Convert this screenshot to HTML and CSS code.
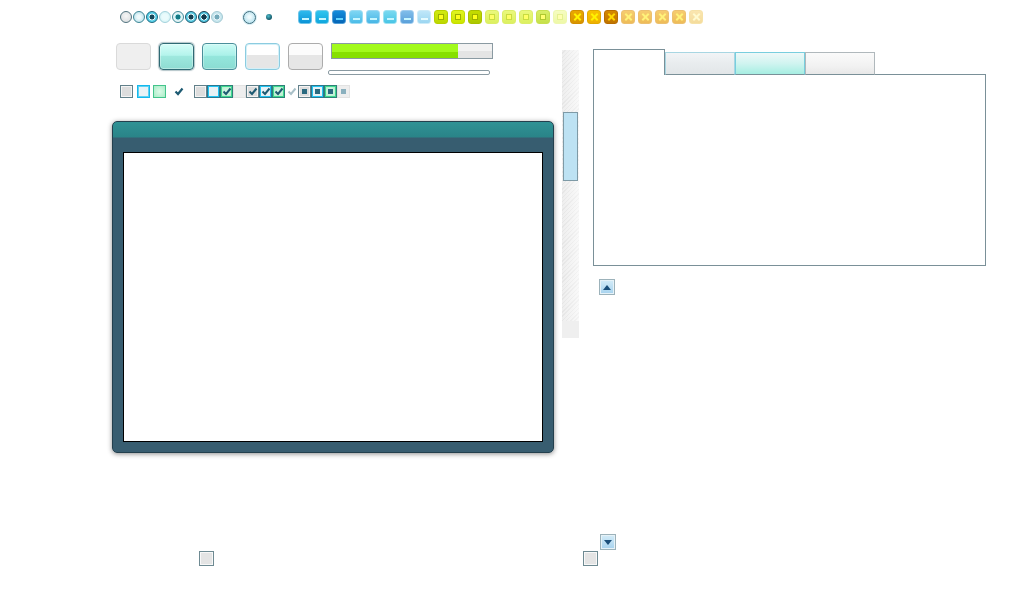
FILE: index.html
```html
<!DOCTYPE html>
<html lang="en">
<head>
<meta charset="utf-8">
<title>Widgets</title>
<link rel="stylesheet" href="styles.css">
</head>
<body>
<div class="page">
  <div class="toprow">
    <div class="radios">
      <span class="r r1"></span><span class="r r2"></span><span class="r r3"></span><span class="r r4"></span>
      <span class="r r5"></span><span class="r r6"></span><span class="r r7"></span><span class="r r8"></span>
    </div>
    <span class="bigradio"></span>
    <span class="dot"></span>
    <div class="icons">
      <span class="ic b b1"></span><span class="ic b b2"></span><span class="ic b b3"></span><span class="ic b b4"></span>
      <span class="ic b b5"></span><span class="ic b b6"></span><span class="ic b b7"></span><span class="ic b b8"></span>
      <span class="ic y y1"></span><span class="ic y y2"></span><span class="ic y y3"></span><span class="ic y y4"></span>
      <span class="ic y y5"></span><span class="ic y y6"></span><span class="ic y y7"></span><span class="ic y y8"></span>
      <span class="ic o o1"></span><span class="ic o o2"></span><span class="ic o o3"></span><span class="ic o o4"></span>
      <span class="ic o o5"></span><span class="ic o o6"></span><span class="ic o o7"></span><span class="ic o o8"></span>
    </div>
  </div>

  <div class="main">
    <div class="left">
      <div class="controls">
        <div class="btns">
          <span class="btn bt1"></span>
          <span class="btn bt2"></span>
          <span class="btn bt3"></span>
          <span class="btn bt4"></span>
          <span class="btn bt5"></span>
        </div>
        <div class="bars">
          <div class="progress"><div class="fill" style="width:79%"></div></div>
          <div class="thin"></div>
        </div>
      </div>

      <div class="checks">
        <span class="cb grey"></span>
        <span class="cb cyan gap4"></span>
        <span class="cb green gap3"></span>
        <span class="tick gap8"><svg width="10" height="9" viewBox="0 0 10 9"><path d="M1.5 4.5 L4 7 L8.5 1.5" fill="none" stroke="#1d5a72" stroke-width="2.2"/></svg></span>
        <div class="group">
          <span class="cb grey"></span>
          <span class="cb cyan"></span>
          <span class="cb green"><svg width="10" height="9" viewBox="0 0 10 9"><path d="M1.5 4.5 L4 7 L8.5 1.5" fill="none" stroke="#1d5a72" stroke-width="2"/></svg></span>
          <span class="cb faint"></span>
          <span class="cb grey"><svg width="10" height="9" viewBox="0 0 10 9"><path d="M1.5 4.5 L4 7 L8.5 1.5" fill="none" stroke="#1d5a72" stroke-width="2"/></svg></span>
          <span class="cb cyan"><svg width="10" height="9" viewBox="0 0 10 9"><path d="M1.5 4.5 L4 7 L8.5 1.5" fill="none" stroke="#1d5a72" stroke-width="2"/></svg></span>
          <span class="cb green"><svg width="10" height="9" viewBox="0 0 10 9"><path d="M1.5 4.5 L4 7 L8.5 1.5" fill="none" stroke="#1d5a72" stroke-width="2"/></svg></span>
          <span class="cb none"><svg width="10" height="9" viewBox="0 0 10 9"><path d="M1.5 4.5 L4 7 L8.5 1.5" fill="none" stroke="#a9c0c8" stroke-width="2"/></svg></span>
          <span class="cb grey"><span class="mark"></span></span>
          <span class="cb cyan"><span class="mark"></span></span>
          <span class="cb green"><span class="mark"></span></span>
          <span class="cb faint"><span class="mark pale"></span></span>
        </div>
      </div>

      <div class="window">
        <div class="win-inner"></div>
      </div>
    </div>

    <div class="scroll">
      <div class="track"><div class="thumb"></div></div>
      <div class="cap"></div>
    </div>

    <div class="right">
      <div class="tabs">
        <div class="tab active"></div>
        <div class="tab t1"></div>
        <div class="tab t2"></div>
        <div class="tab t3"></div>
        <div class="tabfill"></div>
      </div>
      <div class="panel"></div>
      <span class="arrow up"><svg width="10" height="7" viewBox="0 0 10 7"><path d="M1 6 L5 1 L9 6 Z" fill="#1b4f7a"/></svg></span>
      <span class="arrow down"><svg width="10" height="7" viewBox="0 0 10 7"><path d="M1 1 L9 1 L5 6 Z" fill="#1b4f7a"/></svg></span>
    </div>
  </div>

  <div class="bottom">
    <span class="sq first"></span>
    <span class="sq second"></span>
  </div>
</div>
</body>
</html>
```

FILE: styles.css
```css
html, body {
  margin: 0;
  padding: 0;
  background: #ffffff;
  font-family: "Liberation Sans", Arial, sans-serif;
}

.page {
  width: 1024px;
  height: 600px;
  padding-top: 10px;
  box-sizing: border-box;
}

/* ---------- top row ---------- */
.toprow {
  display: flex;
  align-items: center;
  height: 14px;
  margin-left: 120px;
}

.radios {
  display: flex;
  gap: 1px;
}

.r {
  width: 12px;
  height: 12px;
  border-radius: 50%;
  box-sizing: border-box;
  border: 1px solid #50727e;
}
.r1 { background: radial-gradient(circle at 50% 40%, #f6f6f6, #d6dadc); }
.r2 { border-color: #3e8796; background: radial-gradient(circle, #eef9fb 25%, #a6d8e6 100%); }
.r3 { border-color: #1e6a80; background: radial-gradient(circle closest-side, #17485a 0 45%, #e8fbff 55% 62%, #55cfe8 75%); }
.r4 { border-color: #a4d2dc; background: radial-gradient(circle, #eafbfc 40%, #c4eef2); }
.r5 { border-color: #3e8a98; background: radial-gradient(circle closest-side, #137a86 0 45%, #c0eef2 55% 62%, #e6f4f6 75%); }
.r6 { border-color: #1b5a72; background: radial-gradient(circle closest-side, #153e50 0 45%, #e8fbff 55% 62%, #5ccde4 75%); }
.r7 { border-color: #133c50; background: radial-gradient(circle closest-side, #10384a 0 48%, #e8fbff 58% 64%, #4fc4de 76%); }
.r8 { border-color: #a2c8d2; background: radial-gradient(circle closest-side, #74a9ba 0 45%, #eaf6fa 55% 62%, #c6e6ee 75%); }

.bigradio {
  width: 13px;
  height: 13px;
  margin-left: 20px;
  border-radius: 50%;
  box-sizing: border-box;
  border: 1px solid #3c6b7c;
  background: radial-gradient(circle at 50% 45%, #eefafd 15%, #a6dbea 95%);
  box-shadow: 0 0 0 1px #d6f0f6;
}

.dot {
  width: 6px;
  height: 6px;
  margin-left: 10px;
  border-radius: 50%;
  background: radial-gradient(circle at 40% 35%, #4fbccc, #135868 70%);
}

.icons {
  display: flex;
  gap: 3px;
  margin-left: 26px;
}

.ic {
  width: 14px;
  height: 14px;
  border-radius: 3px;
  box-sizing: border-box;
  border: 1px solid transparent;
}

/* blue dash icons */
.b {
  display: flex;
  justify-content: center;
  align-items: flex-end;
  padding-bottom: 3px;
}
.b::after {
  content: "";
  width: 7px;
  height: 2px;
  background: #c6f6ff;
}
.b1 { border-color: #6ec4e8; background: linear-gradient(#2dbaed, #0b93d6); }
.b2 { border-color: #74cdea; background: linear-gradient(#30c4ee, #0fa6de); }
.b3 { border-color: #4f9ed8; background: linear-gradient(#138cdc, #0565b6); }
.b3::after { background: #62d4ff; }
.b4 { border-color: #9cdcf2; background: linear-gradient(#7ed6f3, #4cbce8); }
.b5 { border-color: #9cd8f2; background: linear-gradient(#7ad1f2, #47b6e5); }
.b6 { border-color: #9ee2f2; background: linear-gradient(#7ad9f0, #49c5e6); }
.b7 { border-color: #a2cdef; background: linear-gradient(#80bdea, #5aa0da); }
.b8 { border-color: #cdebf8; background: linear-gradient(#bfe7f9, #9cd6f1); }
.b8::after { background: #e6fbff; }

/* yellow square icons */
.y {
  display: flex;
  justify-content: center;
  align-items: center;
}
.y::after {
  content: "";
  width: 6px;
  height: 6px;
  box-sizing: border-box;
  border: 1px solid #9cb000;
  background: #ffff1a;
}
.y1 { border-color: #b8d000; background: linear-gradient(#d2ea10, #bcd800); }
.y2 { border-color: #c6dc00; background: linear-gradient(#e0f420, #cce600); }
.y3 { border-color: #a8c000; background: linear-gradient(#c4dc00, #acc800); }
.y4, .y5, .y6 { border-color: #dcee6a; background: linear-gradient(#eaf87c, #dcf060); }
.y4::after, .y5::after, .y6::after { border-color: #c8dc40; background: #ffff66; }
.y7 { border-color: #c8e050; background: linear-gradient(#d8ee66, #c6e04a); }
.y7::after { border-color: #b0c830; background: #ffff70; }
.y8 { border-color: #eef8b0; background: linear-gradient(#f6fcc0, #eef8a8); }
.y8::after { border-color: #e4f090; background: #ffffb0; }

/* orange X icons */
.o {
  display: grid;
  place-items: center;
}
.o::before, .o::after {
  content: "";
  grid-area: 1 / 1;
  width: 9px;
  height: 2px;
  background: #fff200;
  transform: rotate(45deg);
}
.o::after { transform: rotate(-45deg); }
.o1 { border-color: #d28e00; background: linear-gradient(#eaa800, #d89400); }
.o2 { border-color: #e2aa00; background: linear-gradient(#f8c200, #eeb000); }
.o3 { border-color: #b86c00; background: linear-gradient(#d48800, #c07400); }
.o3::before, .o3::after { background: #ffd800; }
.o4, .o5, .o6, .o7 { border-color: #ecc070; background: linear-gradient(#f6cc70, #eebc58); }
.o4::before, .o4::after, .o5::before, .o5::after,
.o6::before, .o6::after, .o7::before, .o7::after { background: #fff27a; }
.o8 { border-color: #f6e2a8; background: linear-gradient(#fae6b0, #f4dc9c); }
.o8::before, .o8::after { background: #fffad0; }

/* ---------- main ---------- */
.main {
  display: flex;
  align-items: flex-start;
  margin-top: 19px;
}

.left {
  width: 442px;
  margin-left: 112px;
  display: flex;
  flex-direction: column;
}

.controls {
  display: flex;
  align-items: flex-start;
  padding-left: 4px;
}

.btns {
  display: flex;
  gap: 8px;
}

.btn {
  width: 35px;
  height: 27px;
  box-sizing: border-box;
  border-radius: 4px;
  border: 1px solid #dadada;
}
.bt1 { background: #efefef; }
.bt2 {
  border-color: #2f6a74;
  box-shadow: 0 0 1px 1px rgba(40, 90, 100, 0.35), inset 0 0 0 1px rgba(255, 255, 255, 0.35);
  background: linear-gradient(#d6fdf8, #b4f4ec 45%, #9ee8de 50%, #8edcd2);
}
.bt3 {
  border-color: #4a8e9a;
  box-shadow: inset 0 0 0 1px rgba(255, 255, 255, 0.3);
  background: linear-gradient(#cbfbf5, #aaf1e9 45%, #94e6dc 50%, #8adcd2);
}
.bt4 {
  border-color: #8ccce0;
  box-shadow: inset 0 0 0 1px #d4f0f8;
  background: linear-gradient(#ffffff 0 45%, #e6e6e6 45%);
}
.bt5 {
  border-color: #acacac;
  background: linear-gradient(#fcfcfc 0 45%, #e6e6e6 45%);
}

.bars {
  margin-left: 5px;
  display: flex;
  flex-direction: column;
}

.progress {
  width: 162px;
  height: 16px;
  margin-left: 3px;
  box-sizing: border-box;
  border: 1px solid #8a9aa2;
  background: linear-gradient(#f2f2f2 0 50%, #e4e4e4 50%);
  display: flex;
}
.fill {
  height: 100%;
  background: linear-gradient(#a2fa1c 0 55%, #86e000 55%);
}

.thin {
  width: 162px;
  height: 5px;
  margin-top: 11px;
  box-sizing: border-box;
  border: 1px solid #8a9aa2;
  border-radius: 2px;
  background: #ffffff;
}

.checks {
  display: flex;
  align-items: center;
  margin-top: 10px;
  margin-left: 8px;
  height: 13px;
}

.cb {
  width: 13px;
  height: 13px;
  box-sizing: border-box;
  border: 1px solid #62808a;
  display: grid;
  place-items: center;
}
.cb.grey { background: #dddddd; box-shadow: inset 0 0 0 1px #f4f4f4; }
.cb.cyan { border-color: #2a7890; background: #e8f2f6; box-shadow: inset 0 0 0 1px #22c4f2; }
.cb.green { border-color: #2e8078; background: radial-gradient(circle, #dcfae8, #a8ecc6); box-shadow: inset 0 0 0 1px #3ed890; }
.cb.faint { border-color: #e2e2e2; background: #eeeeee; }
.cb.none { border-color: transparent; background: transparent; }
.checks > .cb.cyan { border-color: #14b8ec; box-shadow: inset 0 0 0 1px #5cd2f4; }
.checks > .cb.green { border-color: #44c48c; box-shadow: none; }

.gap3 { margin-left: 3px; }
.gap4 { margin-left: 4px; }
.gap8 { margin-left: 8px; }

.tick {
  width: 10px;
  height: 9px;
  display: flex;
}

.group {
  display: flex;
  margin-left: 10px;
}

.mark {
  width: 5px;
  height: 5px;
  background: #2a6a80;
}
.mark.pale { background: #8ab0be; }

.window {
  width: 442px;
  height: 332px;
  margin-top: 23px;
  box-sizing: border-box;
  border: 1px solid #24404e;
  border-radius: 5px;
  padding: 30px 10px 10px 10px;
  background: linear-gradient(#2f9295 0, #2a8488 15px, #375d70 16px, #385d70 100%);
  box-shadow: 0 1px 5px rgba(0, 0, 0, 0.45);
  display: flex;
}
.win-inner {
  flex: 1;
  background: #ffffff;
  border: 1px solid #000000;
}

/* scrollbar */
.scroll {
  width: 17px;
  margin-left: 8px;
  margin-top: 7px;
  display: flex;
  flex-direction: column;
}
.track {
  height: 271px;
  padding: 62px 1px 0 1px;
  box-sizing: border-box;
  background:
    linear-gradient(90deg, rgba(0, 0, 0, 0.03), rgba(255, 255, 255, 0.4)),
    repeating-linear-gradient(135deg, #f6f6f6 0 2px, #ececec 2px 3px);
}
.thumb {
  height: 69px;
  box-sizing: border-box;
  border: 1px solid #7e9aa6;
  background: #bde2f3;
}
.cap {
  height: 17px;
  background: #efefef;
}

/* tabs */
.right {
  width: 393px;
  margin-left: 14px;
  margin-top: 6px;
  display: flex;
  flex-direction: column;
  align-items: flex-start;
}
.tabs {
  display: flex;
  align-items: flex-end;
  width: 100%;
  height: 26px;
}
.tab {
  box-sizing: border-box;
  height: 23px;
  width: 70px;
  border: 1px solid #b0bcc0;
  border-bottom-color: #7a9098;
}
.tab.active {
  width: 72px;
  height: 26px;
  border-color: #7a9098;
  border-bottom: none;
  background: #ffffff;
}
.t1 {
  border-color: #a8d6e2;
  border-bottom-color: #7a9098;
  background: linear-gradient(#f2f4f6, #e8ecee 50%, #e2e6e8);
}
.t2 {
  border-color: #78cede;
  border-bottom-color: #7a9098;
  background: linear-gradient(#eef8f8, #d0f4f0 50%, #a6eee2);
}
.t3 {
  border-color: #b0b8bc;
  border-bottom-color: #7a9098;
  background: linear-gradient(#fafafa, #f2f2f2 60%, #e8e8e8);
}
.tabfill {
  flex: 1;
  height: 1px;
  background: #7a9098;
}
.panel {
  width: 100%;
  height: 191px;
  box-sizing: border-box;
  border: 1px solid #7a9098;
  border-top: none;
  background: #ffffff;
}

.arrow {
  width: 16px;
  height: 16px;
  box-sizing: border-box;
  border: 1px solid #9cb2ba;
  box-shadow: inset 0 0 0 1px #e6f2f8;
  background: linear-gradient(#d4ecf8, #a6d2ee);
  display: grid;
  place-items: center;
}
.arrow.up { margin-top: 13px; margin-left: 6px; }
.arrow.down { margin-top: 239px; margin-left: 7px; }

/* bottom squares */
.bottom {
  display: flex;
  margin-top: 1px;
}
.sq {
  width: 15px;
  height: 15px;
  box-sizing: border-box;
  border: 1px solid #6e8a92;
  background: #e4e4e4;
  box-shadow: inset 0 0 0 1px #f8f8f8;
}
.sq.first { margin-left: 199px; }
.sq.second { margin-left: 369px; }
```
